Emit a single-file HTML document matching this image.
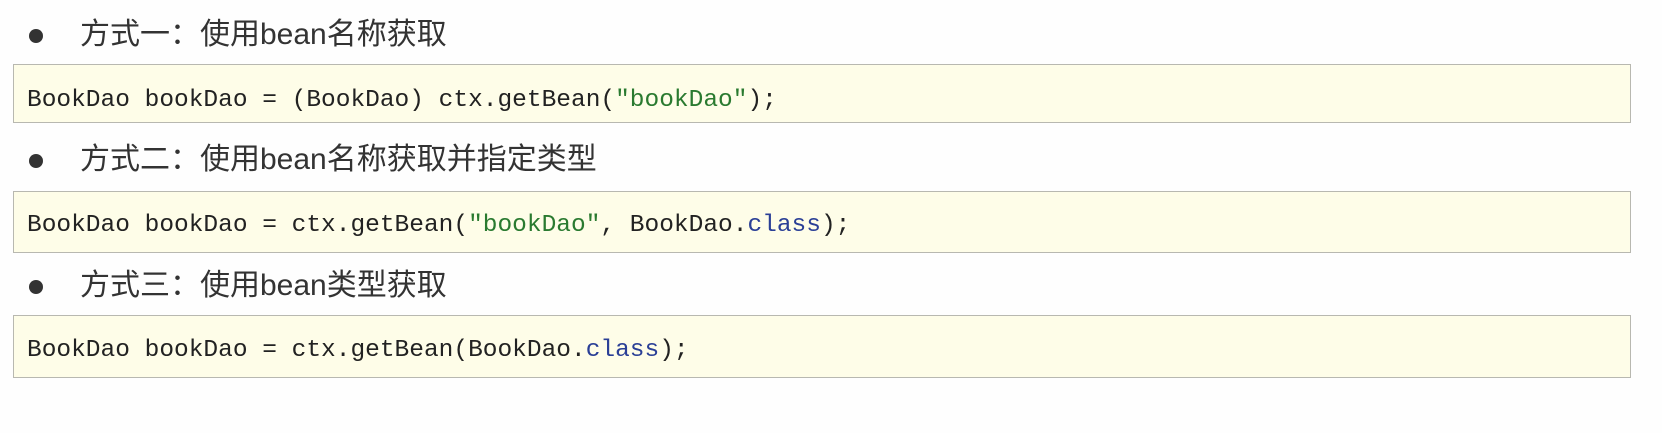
<!DOCTYPE html>
<html><head><meta charset="utf-8"><style>
html,body{margin:0;padding:0;background:#fefefe;width:1662px;height:433px;overflow:hidden;position:relative}
.h{position:absolute;left:80px;font-family:"Liberation Sans","Noto Sans CJK SC",sans-serif;font-size:30px;color:#333;line-height:32px}
.dot{position:absolute;left:29px;width:14px;height:14px;border-radius:50%;background:#333}
.box{position:absolute;left:13px;width:1618px;background:#fefde8;border:1px solid #b8b8b0;box-sizing:border-box}
.c{position:absolute;left:27px;font-family:"Liberation Mono",monospace;font-size:24.5px;color:#222;line-height:30px;white-space:pre}
.s{color:#2a7a30}.k{color:#2a3f96}
</style></head><body>
<div class="dot" style="top:29px"></div><div class="h" style="top:19px">方式一：使用bean名称获取</div>
<div class="box" style="top:64px;height:59px"></div>
<div class="c" style="top:86px">BookDao bookDao = (BookDao) ctx.getBean(<span class="s">"bookDao"</span>);</div>
<div class="dot" style="top:154px"></div><div class="h" style="top:144px">方式二：使用bean名称获取并指定类型</div>
<div class="box" style="top:191px;height:62px"></div>
<div class="c" style="top:211px">BookDao bookDao = ctx.getBean(<span class="s">"bookDao"</span>, BookDao.<span class="k">class</span>);</div>
<div class="dot" style="top:280px"></div><div class="h" style="top:270px">方式三：使用bean类型获取</div>
<div class="box" style="top:315px;height:63px"></div>
<div class="c" style="top:336px">BookDao bookDao = ctx.getBean(BookDao.<span class="k">class</span>);</div>
</body></html>
